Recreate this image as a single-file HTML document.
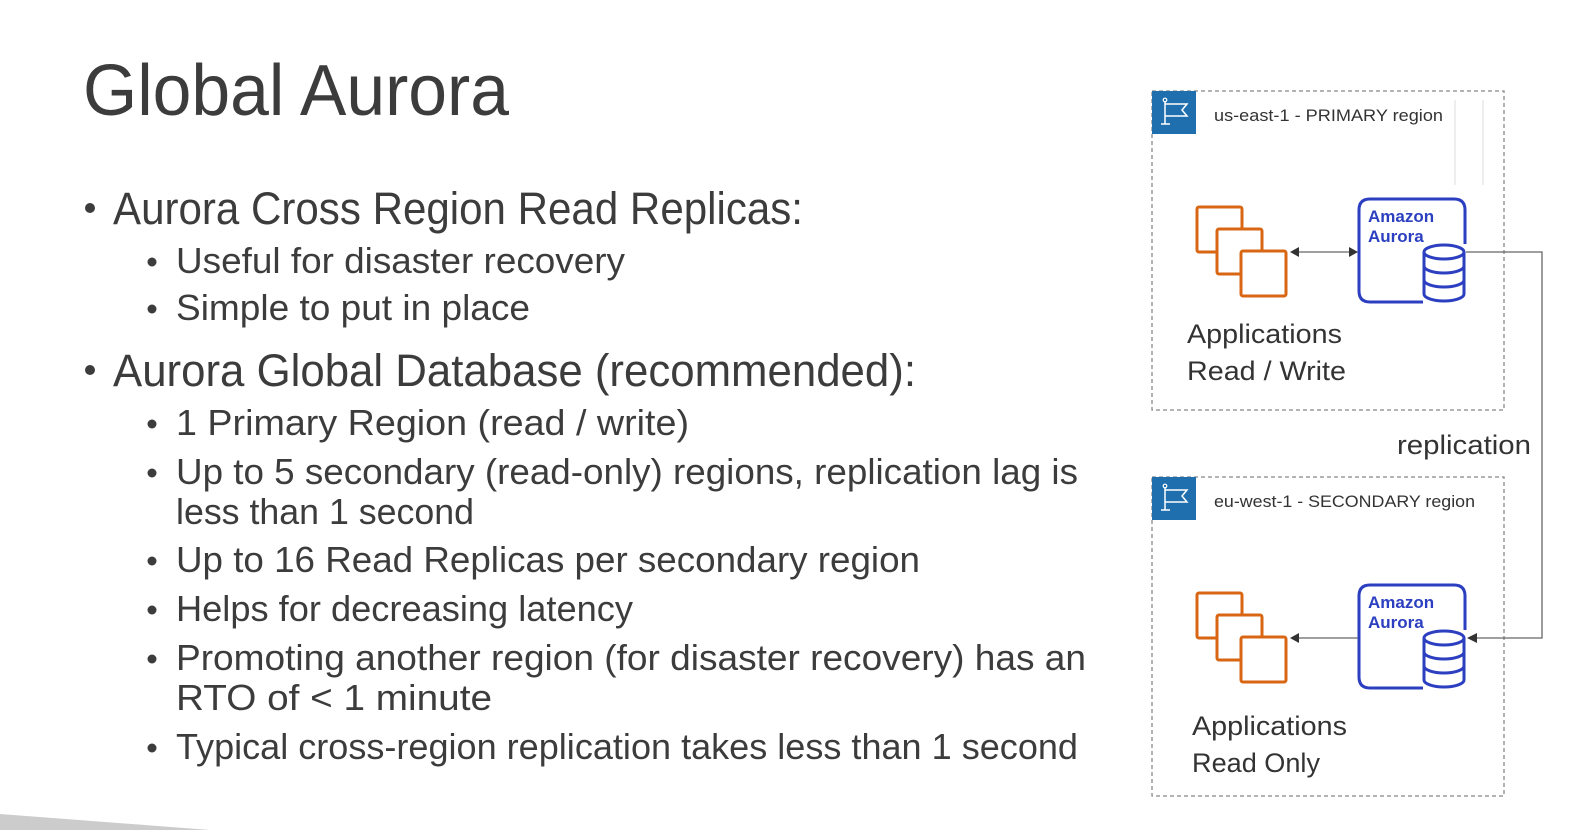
<!DOCTYPE html>
<html><head><meta charset="utf-8"><style>
html,body{margin:0;padding:0;background:#fff;}
svg{display:block}
</style></head><body>
<svg width="1578" height="830" viewBox="0 0 1578 830" xmlns="http://www.w3.org/2000/svg" font-family="Liberation Sans, sans-serif">
<rect width="1578" height="830" fill="#fff"/>
<polygon points="0,814 210,830 0,830" fill="#cccccc"/>
<g fill="#3c3c3c">
<text x="83" y="115" font-size="72" textLength="426" lengthAdjust="spacingAndGlyphs">Global Aurora</text>
<circle cx="90" cy="208" r="5"/>
<text x="113" y="224" font-size="45" textLength="690" lengthAdjust="spacingAndGlyphs">Aurora Cross Region Read Replicas:</text>
<circle cx="152" cy="262" r="4.5"/>
<text x="176" y="273" font-size="36" textLength="449" lengthAdjust="spacingAndGlyphs">Useful for disaster recovery</text>
<circle cx="152" cy="309" r="4.5"/>
<text x="176" y="320" font-size="36" textLength="354" lengthAdjust="spacingAndGlyphs">Simple to put in place</text>
<circle cx="90" cy="370" r="5"/>
<text x="113" y="386" font-size="45" textLength="803" lengthAdjust="spacingAndGlyphs">Aurora Global Database (recommended):</text>
<circle cx="152" cy="424" r="4.5"/>
<text x="176" y="435" font-size="36" textLength="513" lengthAdjust="spacingAndGlyphs">1 Primary Region (read / write)</text>
<circle cx="152" cy="473" r="4.5"/>
<text x="176" y="484" font-size="36" textLength="902" lengthAdjust="spacingAndGlyphs">Up to 5 secondary (read-only) regions, replication lag is</text>
<text x="176" y="524" font-size="36" textLength="298" lengthAdjust="spacingAndGlyphs">less than 1 second</text>
<circle cx="152" cy="561" r="4.5"/>
<text x="176" y="572" font-size="36" textLength="744" lengthAdjust="spacingAndGlyphs">Up to 16 Read Replicas per secondary region</text>
<circle cx="152" cy="610" r="4.5"/>
<text x="176" y="621" font-size="36" textLength="457" lengthAdjust="spacingAndGlyphs">Helps for decreasing latency</text>
<circle cx="152" cy="659" r="4.5"/>
<text x="176" y="670" font-size="36" textLength="910" lengthAdjust="spacingAndGlyphs">Promoting another region (for disaster recovery) has an</text>
<text x="176" y="710" font-size="36" textLength="316" lengthAdjust="spacingAndGlyphs">RTO of &lt; 1 minute</text>
<circle cx="152" cy="748" r="4.5"/>
<text x="176" y="759" font-size="36" textLength="902" lengthAdjust="spacingAndGlyphs">Typical cross-region replication takes less than 1 second</text>
</g>

<defs>
<g id="region">
<rect x="1152" y="91" width="352" height="319" fill="none" stroke="#888" stroke-width="1.3" stroke-dasharray="4,3"/>
<rect x="1152" y="91" width="44" height="43" fill="#1f6fae"/>
<path d="M1165,101 V124 M1161,124 H1170 M1165,104 H1187 L1182,110 L1187,116 H1165" fill="none" stroke="#fff" stroke-width="1.5"/>
<circle cx="1165" cy="100" r="1.8" fill="none" stroke="#fff" stroke-width="1.2"/>
<g fill="#fff" stroke="#d86613" stroke-width="3">
<rect x="1197" y="207" width="45" height="45" rx="2"/>
<rect x="1217" y="229" width="45" height="45" rx="2"/>
<rect x="1241" y="251" width="45" height="45" rx="2"/>
</g>
<path d="M1423,302 H1370 Q1359,302 1359,291 V210 Q1359,199 1370,199 H1454 Q1465,199 1465,210 V244" fill="none" stroke="#2b3fc0" stroke-width="3"/>
<g fill="#fff" stroke="#2b3fc0" stroke-width="3">
<path d="M1424,252 V294 A20,7 0 0 0 1464,294 V252"/>
<ellipse cx="1444" cy="252" rx="20" ry="7"/>
<path d="M1424,266 A20,7 0 0 0 1464,266 M1424,280 A20,7 0 0 0 1464,280" fill="none"/>
</g>
<text x="1368" y="222" font-size="17" font-weight="bold" fill="#2b3fc0">Amazon</text>
<text x="1368" y="242" font-size="17" font-weight="bold" fill="#2b3fc0">Aurora</text>
</g>
</defs>
<use href="#region"/>
<use href="#region" transform="translate(0,386)"/>
<text x="1214" y="121" font-size="17" fill="#333" textLength="229" lengthAdjust="spacingAndGlyphs">us-east-1 - PRIMARY region</text>
<line x1="1455" y1="100" x2="1455" y2="185" stroke="#ddd" stroke-width="1"/>
<line x1="1483" y1="100" x2="1483" y2="185" stroke="#ddd" stroke-width="1"/>
<text x="1214" y="507" font-size="17" fill="#333" textLength="261" lengthAdjust="spacingAndGlyphs">eu-west-1 - SECONDARY region</text>
<g fill="#333" font-size="27">
<text x="1187" y="343" textLength="155" lengthAdjust="spacingAndGlyphs">Applications</text>
<text x="1187" y="380" textLength="159" lengthAdjust="spacingAndGlyphs">Read / Write</text>
<text x="1192" y="735" textLength="155" lengthAdjust="spacingAndGlyphs">Applications</text>
<text x="1192" y="772" textLength="128" lengthAdjust="spacingAndGlyphs">Read Only</text>
<text x="1397" y="454" textLength="134" lengthAdjust="spacingAndGlyphs">replication</text>
</g>
<g stroke="#666" stroke-width="1.3" fill="none">
<line x1="1298" y1="252" x2="1350" y2="252"/>
<path d="M1466,252 H1542 V638 H1476"/>
<line x1="1298" y1="638" x2="1358" y2="638"/>
</g>
<g fill="#333">
<polygon points="1290,252 1299,247 1299,257"/>
<polygon points="1358,252 1349,247 1349,257"/>
<polygon points="1467,638 1477,633 1477,643"/>
<polygon points="1290,638 1299,633 1299,643"/>
</g>
</svg>
</body></html>
